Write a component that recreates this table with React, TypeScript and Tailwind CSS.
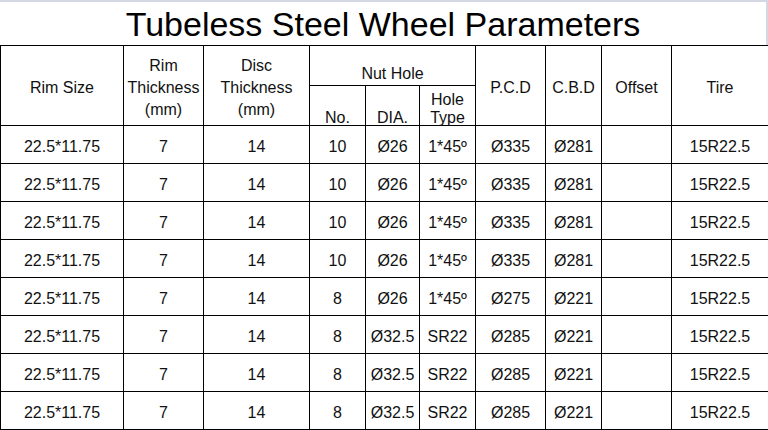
const cols = [123, 80, 106, 56, 54, 56, 70, 56, 70, 97];

type Row = {
  size: string;
  rim: string;
  disc: string;
  no: string;
  dia: string;
  type: string;
  pcd: string;
  cbd: string;
  offset: string;
  tire: string;
};

const base = { size: "22.5*11.75", rim: "7", disc: "14", offset: "", tire: "15R22.5" };

const rows: Row[] = [
  { ...base, no: "10", dia: "Ø26", type: "1*45º", pcd: "Ø335", cbd: "Ø281" },
  { ...base, no: "10", dia: "Ø26", type: "1*45º", pcd: "Ø335", cbd: "Ø281" },
  { ...base, no: "10", dia: "Ø26", type: "1*45º", pcd: "Ø335", cbd: "Ø281" },
  { ...base, no: "10", dia: "Ø26", type: "1*45º", pcd: "Ø335", cbd: "Ø281" },
  { ...base, no: "8", dia: "Ø26", type: "1*45º", pcd: "Ø275", cbd: "Ø221" },
  { ...base, no: "8", dia: "Ø32.5", type: "SR22", pcd: "Ø285", cbd: "Ø221" },
  { ...base, no: "8", dia: "Ø32.5", type: "SR22", pcd: "Ø285", cbd: "Ø221" },
  { ...base, no: "8", dia: "Ø32.5", type: "SR22", pcd: "Ø285", cbd: "Ø221" },
];

const th = "border border-black p-0 pt-[4px] align-middle text-center font-normal leading-[22px]";
const sub = "border border-black p-0 align-bottom text-center font-normal leading-[18px]";
const td = "border border-black p-0 pt-[4px] align-middle text-center";

export default function App() {
  return (
    <div className="w-[768px] h-[430px] overflow-hidden bg-white text-[16px] text-[#111] font-['Liberation_Sans',Arial,sans-serif]">
      <div className="h-[45px] border-t-2 border-r-2 border-[#d4d7e4] flex items-center justify-center">
        <h1 className="text-[34px] leading-none text-black">Tubeless Steel Wheel Parameters</h1>
      </div>

      <table className="w-[768px] table-fixed border-collapse">
        <colgroup>
          {cols.map((w, i) => (
            <col key={i} style={{ width: w }} />
          ))}
        </colgroup>
        <thead>
          <tr className="h-[40px]">
            <th rowSpan={2} className={th}>Rim Size</th>
            <th rowSpan={2} className={th}>
              Rim<br />Thickness<br />(mm)
            </th>
            <th rowSpan={2} className={th}>
              Disc<br />Thickness<br />(mm)
            </th>
            <th colSpan={3} className={`${sub} pb-[2px]`}>Nut Hole</th>
            <th rowSpan={2} className={th}>P.C.D</th>
            <th rowSpan={2} className={th}>C.B.D</th>
            <th rowSpan={2} className={th}>Offset</th>
            <th rowSpan={2} className={th}>Tire</th>
          </tr>
          <tr className="h-[40px]">
            <th className={sub}>
              <div className="relative top-[2px]">No.</div>
            </th>
            <th className={sub}>
              <div className="relative top-[2px]">DIA.</div>
            </th>
            <th className={sub}>
              <div className="relative top-[2px]">Hole<br />Type</div>
            </th>
          </tr>
        </thead>
        <tbody>
          {rows.map((r, i) => (
            <tr key={i} className="h-[38px]">
              <td className={td}>{r.size}</td>
              <td className={td}>{r.rim}</td>
              <td className={td}>{r.disc}</td>
              <td className={td}>{r.no}</td>
              <td className={td}>{r.dia}</td>
              <td className={td}>{r.type}</td>
              <td className={td}>{r.pcd}</td>
              <td className={td}>{r.cbd}</td>
              <td className={td}>{r.offset}</td>
              <td className={td}>{r.tire}</td>
            </tr>
          ))}
        </tbody>
      </table>
    </div>
  );
}
